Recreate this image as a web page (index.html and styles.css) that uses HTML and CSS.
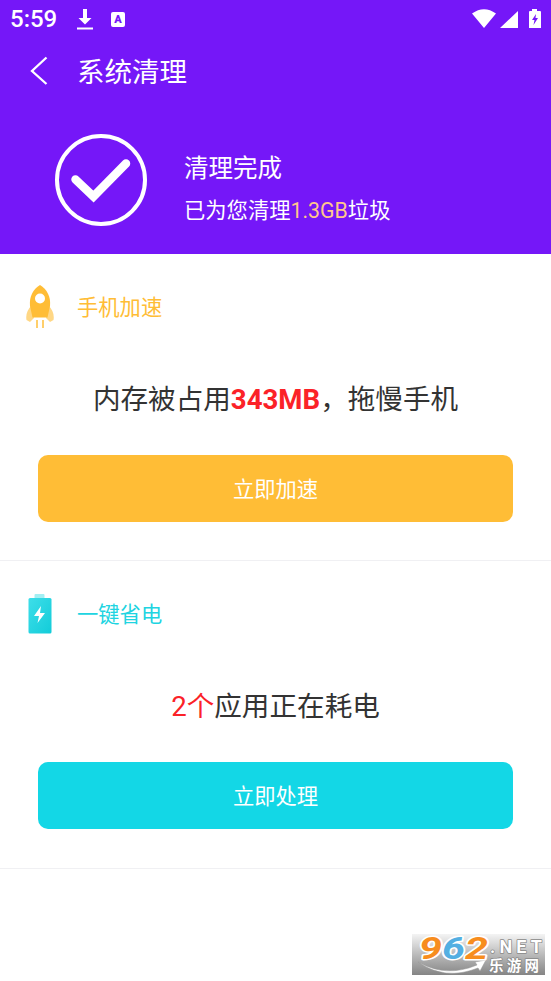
FILE: index.html
```html
<!DOCTYPE html>
<html lang="zh-CN">
<head>
<meta charset="utf-8">
<title>系统清理</title>
<link rel="stylesheet" href="styles.css">
</head>
<body>
<header class="hero">
  <div class="status">
    <span class="clock">5:59</span>
    <svg class="download" width="16" height="21" viewBox="0 0 16 21"><path d="M6 0h4v9h4.500L8 15.500 1.500 9H6zM0 18.500h16V20.500H0z" fill="#fff"/></svg>
    <span class="badge">A</span>
    <svg class="signals" width="70" height="20" viewBox="0 0 70 20"><path d="M0 4.500Q12-4 24 4.500L12 19zM28 19 46 2v17zM57 2h3V0h5v2h3q1 0 1 1v16H57V3q0-1 1-1z" fill="#fff"/><path d="M64 5l-4 6h2.500l-1 5 4.500-7h-2.500z" fill="#7517f8"/></svg>
  </div>
  <div class="nav">
    <svg width="18" height="30" viewBox="0 0 18 30"><path d="M16.500 1.500 2 15 16.500 28" fill="none" stroke="#fff" stroke-width="2.300"/></svg>
    <h1>系统清理</h1>
  </div>
  <div class="result">
    <svg width="92" height="92" viewBox="0 0 92 92" fill="none" stroke="#fff"><circle cx="46" cy="46" r="44" stroke-width="4"/><path d="M20.500 45.500 38.500 62.500 71 29.500" stroke-width="8.500" stroke-linecap="round"/></svg>
    <div>
      <p class="done">清理完成</p>
      <p class="detail">已为您清理<span>1.3GB</span>垃圾</p>
    </div>
  </div>
</header>
<main>
  <section class="card boost">
    <div class="heading">
      <svg width="28" height="44" viewBox="0 0 28 44"><path d="M6 20Q-1 27 .5 35L4 37 8 33zM22 20q7 7 5.500 15L24 37 20 33z" fill="#ffd785"/><path d="M14 0C7 4 3 12 4 21L6.500 32.500h15L24 21C25 12 21 4 14 0z" fill="#ffbd36"/><circle cx="14" cy="13.500" r="5" fill="#fff"/><path d="M11 35v8M17 35v8" stroke="#ffcf6b" stroke-width="2"/></svg>
      <h2>手机加速</h2>
    </div>
    <p class="message">内存被占用<b>343MB</b>，拖慢手机</p>
    <button><span>立即加速</span></button>
  </section>
  <section class="card power">
    <div class="heading">
      <svg width="28" height="44" viewBox="0 0 28 44"><defs><linearGradient id="cell" x2="1" y2="1"><stop stop-color="#3edee9"/><stop offset="1" stop-color="#12ccd9"/></linearGradient></defs><path d="M8.500 6V3q0-1 1-1h8q1 0 1 1v3z" fill="#a3eff3"/><rect x="2.500" y="6" width="23" height="35.500" rx="1.500" fill="url(#cell)"/><path d="M15 14 8 24h5l-1.500 7L19 21h-5z" fill="#fff"/></svg>
      <h2>一键省电</h2>
    </div>
    <p class="message"><span>2个</span>应用正在耗电</p>
    <button><span>立即处理</span></button>
  </section>
</main>
<aside class="watermark">
  <svg width="133" height="41" viewBox="0 0 133 41">
    <path d="M6 28Q34 44 65 31L63 28 74 26 68 37 66 34Q33 47 6 28z" fill="#fff" stroke="#999" stroke-width=".5"/>
    <g class="digits"><text x="7" y="25" textLength="23" lengthAdjust="spacingAndGlyphs" fill="#f78d1e">9</text><text x="30" y="25" textLength="23" lengthAdjust="spacingAndGlyphs" fill="#53afe2">6</text><text x="53" y="25" textLength="23" lengthAdjust="spacingAndGlyphs" fill="#f78d1e">2</text></g>
    <text class="net" x="78" y="18.500" textLength="52">.NET</text>
    <text class="site" x="77" y="37" textLength="50">乐游网</text>
  </svg>
</aside>
</body>
</html>
```
FILE: styles.css
```css
* { box-sizing: border-box; }
body, h1, h2, p { margin: 0; font-weight: 400; }
body { position: relative; height: 981px; overflow: hidden; background: #fff; color: #333; font-family: Roboto, "Noto Sans CJK SC", sans-serif; }
svg { display: block; flex: none; }
.hero { height: 254px; background: #7517f8; color: #fff; }
.status { height: 38px; display: flex; align-items: center; padding: 0 9px 0 10px; }
.clock { width: 67px; font-size: 24px; font-weight: 500; line-height: 38px; }
.badge { width: 14px; height: 15px; margin: 0 auto 0 18px; border-radius: 2px; background: #fff; color: #7517f8; font-size: 11px; line-height: 15px; font-weight: 900; text-align: center; }
.nav { height: 66px; padding-left: 30px; display: flex; align-items: center; gap: 29px; }
h1 { padding-top: 4px; font-size: 27.5px; line-height: 40px; }
.result { display: flex; padding: 30px 0 0 55px; gap: 37px; }
.done { margin-top: 17px; font-size: 24.500px; line-height: 36px; }
.detail { margin-top: 8px; font-size: 21.300px; line-height: 32px; }
.detail span { color: #ffc68b; }
.card { height: 307px; padding: 31px 38px 0; border-bottom: 1px solid #f0f0f3; }
.power { height: 308px; }
.heading { display: flex; align-items: center; gap: 23px; margin-left: -12px; height: 44px; }
h2 { padding-top: 2px; font-size: 21.300px; line-height: 32px; }
.boost h2 { color: #ffbd36; }
.power h2 { color: #20d4e1; }
.message { margin-top: 51px; height: 40px; line-height: 40px; font-size: 27.600px; text-align: center; white-space: nowrap; }
.message b { color: #fb2228; font-weight: 700; }
.message span { color: #fb2228; }
button { display: block; width: 475px; height: 67px; margin-top: 35px; padding: 0 0 2px; border: 0; border-radius: 10px; color: #fff; font: 21.300px Roboto, "Noto Sans CJK SC", sans-serif; }
.boost button { background: #ffbd36; }
.power button { background: #13d7e6; }
.watermark { position: absolute; left: 412px; top: 934px; width: 133px; height: 41px; background: linear-gradient(#f4f4f4, #bbb 50%, #858585); }
.watermark svg { overflow: visible; }
.watermark text { paint-order: stroke; stroke-linejoin: round; }
.digits { font: italic 700 31px Roboto, sans-serif; stroke: #fff; stroke-width: 3px; }
.net { font: 700 18px Roboto, sans-serif; fill: #fff; stroke: #888; stroke-width: 1.5px; }
.site { font: 700 14.500px "Noto Sans CJK SC", sans-serif; fill: #fff; stroke: #888; stroke-width: 1.5px; }
```
